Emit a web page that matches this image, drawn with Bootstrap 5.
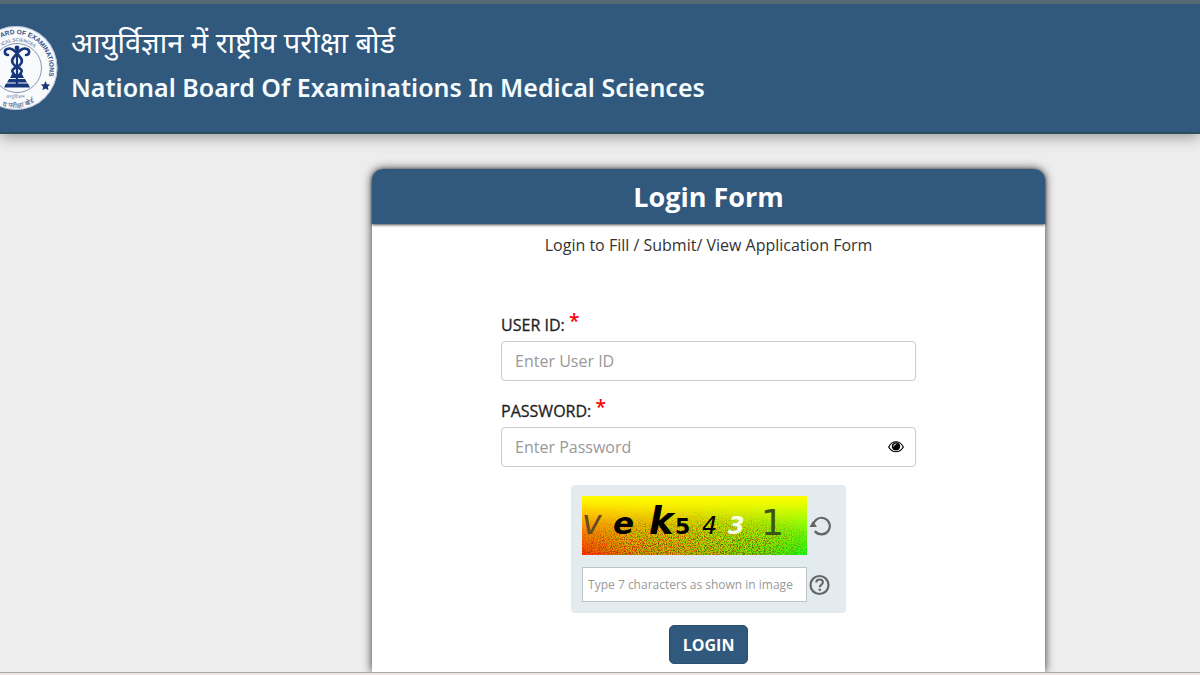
<!DOCTYPE html>
<html lang="en">
<head>
<meta charset="utf-8">
<meta name="viewport" content="width=device-width, initial-scale=1">
<title>Login Form</title>
<link href="https://cdn.jsdelivr.net/npm/bootstrap@5.3.0/dist/css/bootstrap.min.css" rel="stylesheet">
<style>
:root { --navy: #31587d; }
body { font-family: "Open Sans", "Noto Sans", sans-serif; background: #ededed; color: #333; }
.site-header { background: var(--navy); border-top: 4px solid #566874; border-bottom: 2px solid #29505a; height: 134px; box-shadow: 0 2px 14px rgba(0,0,0,.4); }
.crest { width: 84px; height: 86px; margin-left: -26px; }
.site-title { margin-left: 13px; padding-bottom: 6px; }
.title-hi { font-size: 29px; line-height: 36px; margin-bottom: 8px; }
.title-en { font-family: "Noto Sans", sans-serif; font-size: 25px; line-height: 38px; font-weight: 600; color: #f4fcff; }
.login-area { padding: 35px 0 0 31%; }
.login-card { width: 81.3%; border-radius: 11px 11px 0 0; box-shadow: 0 0 10px rgba(0,0,0,.8); }
.login-head { background: var(--navy); height: 55px; border-radius: 11px 11px 0 0; box-shadow: 0 1px 3px rgba(0,0,0,.7); font-size: 27px; line-height: 55px; font-weight: 700; }
.login-note { font-size: 16px; line-height: 24px; margin: 9px 0 56px; }
.fields { width: 415px; }
.field-label { font-size: 16px; line-height: 24px; color: #222; -webkit-text-stroke: .3px #222; }
.req { color: #f00; font-size: 19px; line-height: 0; top: -3px; font-weight: 600; -webkit-text-stroke: 0; }
.field-input { height: 40px; font-size: 16px; padding: 6px 13px; border: 1px solid #ccc; border-radius: 4px; }
.field-input::placeholder, .captcha-input::placeholder { color: #999; opacity: 1; }
.field-gap { margin-bottom: 18px; }
.eye-btn { right: 12px; top: 12px; line-height: 0; }
.captcha-box { width: 275px; padding: 11px; background: #e4ebef; border-radius: 4px; row-gap: 12px; }
.captcha-row { gap: 2px; }
.captcha-pic { width: 225px; height: 59px; }
.captcha-input { width: 225px; height: 35px; font-size: 12px; padding: 4px 5px; border: 1px solid #bcc5cc; color: #333; background: #fff; }
.plain-btn { border: 0; background: none; padding: 0; line-height: 0; }
.login-btn { --bs-btn-bg: var(--navy); --bs-btn-border-color: #2b4f71; --bs-btn-color: #fff; --bs-btn-hover-bg: #26486a; --bs-btn-hover-color: #fff; font-size: 16px; font-weight: 700; line-height: 24px; height: 39px; padding: 6px 13px; border-radius: 5px; margin: 12px 0 8px; }
.page-foot { height: 3px; background: #f3e3e5; border-top: 1px solid #aaa; position: relative; }
</style>
</head>
<body class="d-flex flex-column min-vh-100 overflow-x-hidden">
<header class="site-header d-flex align-items-center text-white">
  <svg class="crest flex-shrink-0" viewBox="0 0 84 86" role="img" aria-label="National Board of Examinations crest">
    <defs>
      <path id="ringTop" d="M27 12.500A34 34.500 0 0 1 72 59"/>
      <path id="ringInner" d="M28 21A26.500 26.500 0 0 1 69 48"/>
      <path id="ringLow" d="M28 80.500A40 40 0 0 0 76 62"/>
    </defs>
    <ellipse cx="42" cy="43" rx="41.500" ry="42" fill="#f8fafc"/>
    <ellipse cx="42" cy="43" rx="41" ry="41.500" fill="none" stroke="#a4b4cc" stroke-width=".8"/>
    <ellipse cx="43" cy="43" rx="24.500" ry="24.500" fill="none" stroke="#7488ad" stroke-width=".9"/>
    <g font-family="Liberation Sans, sans-serif" fill="#354e83">
      <text font-size="6.500" font-weight="700"><textPath href="#ringTop">ARD OF EXAMINATIONS</textPath></text>
      <text font-size="4.600"><textPath href="#ringInner">ICAL SCIENCES</textPath></text>
      <text font-size="7"><textPath href="#ringLow">य परीक्षा बोर्ड</textPath></text>
      <text x="32" y="73" font-size="4.500" fill="#6f80a6">आयुर्विज्ञान</text>
    </g>
    <path d="M71.500 56l1.400 3.200 3.400.3-2.500 2.300.7 3.400-3-1.800-3 1.800.7-3.400-2.500-2.300 3.400-.3z" fill="#18377b"/>
    <g fill="none" stroke="#17377d" stroke-linecap="round">
      <path d="M43 24v36" stroke-width="2.200"/>
      <path d="M34 30c-4 0-4-5-1-6 5-2 9 3 13 8 4 4 1 8-3 10-5 2-6 4-3 7M52 30c4 0 4-5 1-6-5-2-9 3-13 8-4 4-1 8 3 10 5 2 6 4 3 7" stroke-width="2.600"/>
    </g>
    <g fill="#17377d"><circle cx="43" cy="23" r="2.400"/><path d="M38 49h10l2 4H36zM35 54h16l2 3.500H33zM32 58.500h22l2 4H30z"/></g>
  </svg>
  <div class="site-title text-nowrap">
    <div class="title-hi" lang="hi">आयुर्विज्ञान में राष्ट्रीय परीक्षा बोर्ड</div>
    <h1 class="title-en mb-0">National Board Of Examinations In Medical Sciences</h1>
  </div>
</header>

<main class="login-area flex-grow-1 d-flex">
  <section class="login-card bg-white">
    <h2 class="login-head text-white text-center mb-0">Login Form</h2>
    <form class="d-flex flex-column align-items-center">
      <p class="login-note">Login to Fill / Submit/ View Application Form</p>
      <div class="fields">
        <div class="field-gap">
          <label class="field-label d-block mb-1" for="userId">USER ID: <sup class="req">*</sup></label>
          <input class="form-control field-input" id="userId" type="text" placeholder="Enter User ID">
        </div>
        <div class="field-gap">
          <label class="field-label d-block mb-1" for="password">PASSWORD: <sup class="req">*</sup></label>
          <div class="position-relative">
            <input class="form-control field-input" id="password" type="password" placeholder="Enter Password">
            <button class="plain-btn eye-btn position-absolute" type="button" aria-label="Show password">
              <svg width="16" height="16" viewBox="0 0 16 16"><path d="M.7 8C4 1 12 1 15.300 8 12 14.300 4 14.300.7 8z" fill="#fff" stroke="#000" stroke-width="1.200"/><circle cx="8" cy="7.400" r="4.200" fill="#000"/><path d="M5.700 7.200A2.300 2.300 0 0 1 8 4.900" fill="none" stroke="#fff" stroke-width=".9" stroke-linecap="round"/></svg>
            </button>
          </div>
        </div>
      </div>
      <div class="captcha-box d-flex flex-column">
        <div class="captcha-row d-flex align-items-center">
          <svg class="captcha-pic" viewBox="0 0 225 59" role="img" aria-label="Captcha image">
            <defs>
              <linearGradient id="across"><stop offset="0" stop-color="#ff1800"/><stop offset=".4" stop-color="#c47a00"/><stop offset=".65" stop-color="#68b800"/><stop offset="1" stop-color="#00ff10"/></linearGradient>
              <linearGradient id="down" x2="0" y2="1"><stop offset="0" stop-color="#ff0"/><stop offset=".15" stop-color="#ff0" stop-opacity=".9"/><stop offset="1" stop-color="#ff0" stop-opacity="0"/></linearGradient>
              <linearGradient id="grainFade" x2="0" y2="1"><stop offset="0" stop-color="#000"/><stop offset=".15" stop-color="#333"/><stop offset=".7" stop-color="#fff"/></linearGradient>
              <radialGradient id="grainSide" cx=".5" cy=".8" r=".6"><stop offset="0" stop-color="#000" stop-opacity="0"/><stop offset=".5" stop-color="#000" stop-opacity=".1"/><stop offset="1" stop-color="#000" stop-opacity=".9"/></radialGradient>
              <filter id="grain" x="0" y="0" width="1" height="1"><feTurbulence type="fractalNoise" baseFrequency=".85" numOctaves="2" seed="7"/><feColorMatrix values="4 0 0 0 -1.500  0 4 0 0 -1.500  0 0 0 0 0  0 0 0 0 1"/></filter>
              <mask id="grainMask"><rect width="225" height="59" fill="url(#grainFade)"/><rect width="225" height="59" fill="url(#grainSide)"/></mask>
            </defs>
            <rect width="225" height="59" fill="url(#across)"/>
            <rect width="225" height="59" fill="url(#down)"/>
            <g mask="url(#grainMask)"><rect width="225" height="59" filter="url(#grain)" opacity=".5"/></g>
            <g font-family="DejaVu Sans, sans-serif" fill="#000">
              <text x="0" y="38" font-size="33" font-style="italic" fill="#644c28">v</text>
              <text x="31" y="38" font-size="31" font-weight="700" font-style="italic">e</text>
              <text x="67" y="38" font-size="37" font-weight="700" font-style="italic">k</text>
              <text x="93" y="38" font-size="22" font-weight="700">5</text>
              <text x="120" y="38" font-size="24" font-style="italic">4</text>
              <text x="146" y="38" font-size="24" font-weight="700" font-style="italic" fill="#f8ffe8">3</text>
              <text x="179" y="39" font-size="36" fill="#3c5418">1</text>
            </g>
          </svg>
          <button class="plain-btn" type="button" aria-label="Reload captcha">
            <svg width="22" height="22" viewBox="0 0 22 22"><path d="M4.200 11a8.300 8.300 0 1 1 1.600 5" fill="none" stroke="#666" stroke-width="2.200"/><path d="M.5 12L4 6 8 12z" fill="#666"/></svg>
          </button>
        </div>
        <div class="captcha-row d-flex align-items-center">
          <input class="captcha-input" type="text" aria-label="Captcha characters" placeholder="Type 7 characters as shown in image">
          <button class="plain-btn" type="button" aria-label="Help">
            <svg width="21" height="22" viewBox="0 0 21 22"><circle cx="10.500" cy="11" r="9" fill="none" stroke="#666" stroke-width="2.200"/><path d="M7.300 8.600c0-4.200 6.600-4 6.600-.4 0 2.300-3.100 2.500-3.100 5" fill="none" stroke="#666" stroke-width="2.100"/><circle cx="10.800" cy="15.700" r="1.300" fill="#666"/></svg>
          </button>
        </div>
      </div>
      <button class="btn login-btn" type="submit">LOGIN</button>
    </form>
  </section>
</main>
<footer class="page-foot"></footer>
<script src="https://cdn.jsdelivr.net/npm/bootstrap@5.3.0/dist/js/bootstrap.bundle.min.js"></script>
</body>
</html>
